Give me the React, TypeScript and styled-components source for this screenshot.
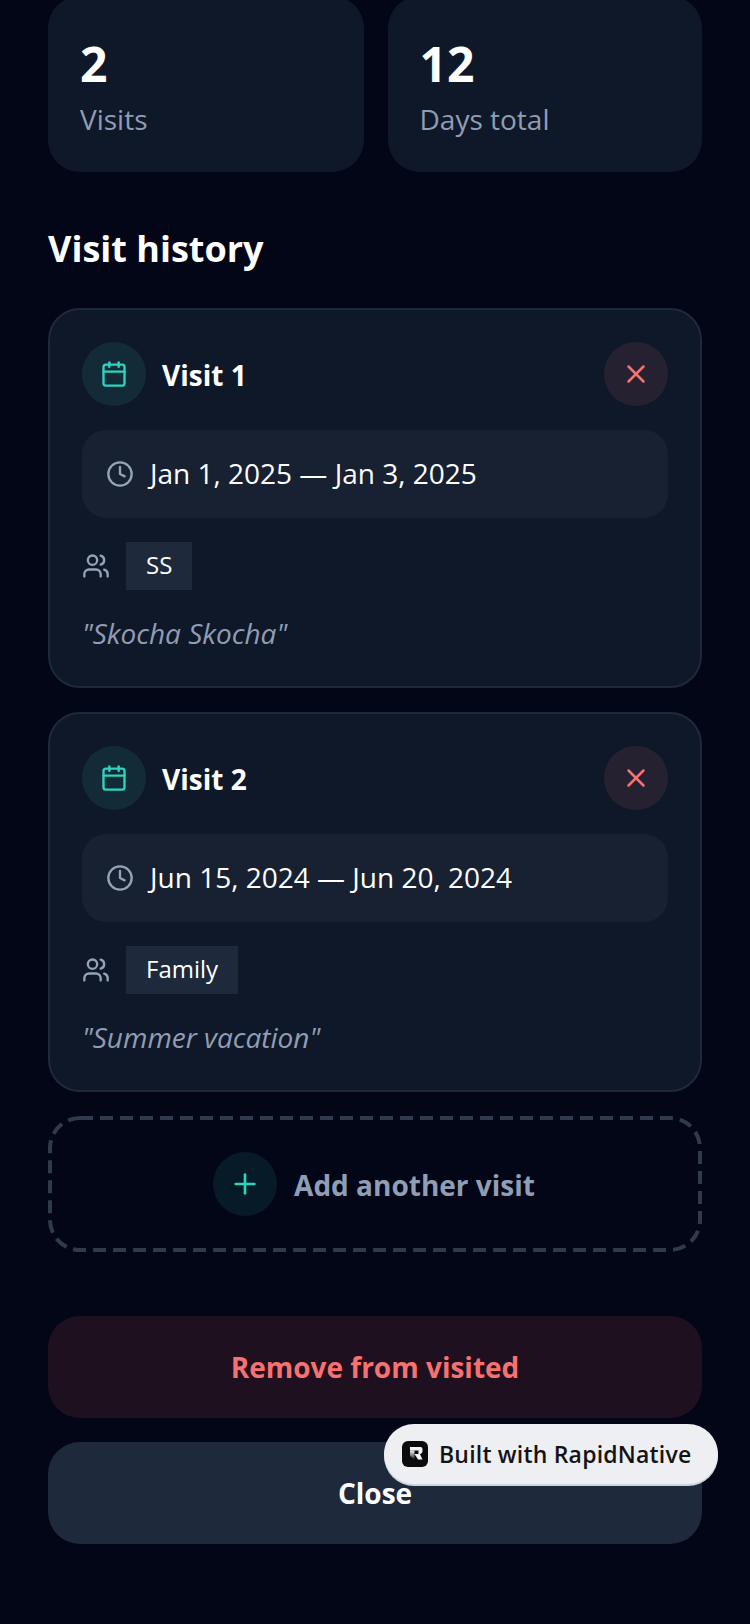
import React from 'react';
import styled, {createGlobalStyle} from 'styled-components';
import {Calendar, Clock, Plus, Users, X} from 'lucide-react';

const visits = [
    {title: 'Visit 1', dates: 'Jan 1, 2025 — Jan 3, 2025', company: 'SS', note: '"Skocha Skocha"'},
    {title: 'Visit 2', dates: 'Jun 15, 2024 — Jun 20, 2024', company: 'Family', note: '"Summer vacation"'},
];

const App = () => {
    return (
        <>
            <GlobalStyle/>
            <Page>
                <Stats>
                    <StatCard>
                        <StatValue>2</StatValue>
                        <StatLabel>Visits</StatLabel>
                    </StatCard>
                    <StatCard>
                        <StatValue>12</StatValue>
                        <StatLabel>Days total</StatLabel>
                    </StatCard>
                </Stats>
                <Heading>Visit history</Heading>
                <VisitList>
                    {visits.map((visit) => (
                        <VisitCard key={visit.title}>
                            <VisitHeader>
                                <IconCircle tone='teal'>
                                    <Calendar size={28} color='#2dd4bf' strokeWidth={2}/>
                                </IconCircle>
                                <VisitTitle>{visit.title}</VisitTitle>
                                <IconCircle tone='red'>
                                    <X size={30} color='#f87171' strokeWidth={2}/>
                                </IconCircle>
                            </VisitHeader>
                            <DateRow>
                                <Clock size={28} color='#94a3b8' strokeWidth={2}/>
                                <DateText>{visit.dates}</DateText>
                            </DateRow>
                            <CompanyRow>
                                <Users size={28} color='#94a3b8' strokeWidth={2}/>
                                <Chip>{visit.company}</Chip>
                            </CompanyRow>
                            <Note>{visit.note}</Note>
                        </VisitCard>
                    ))}
                    <AddCard>
                        <DashedOutline viewBox='0 0 654 136'>
                            <rect x='2' y='2' width='650' height='132' rx='30' fill='none' stroke='#2f3b4c' strokeWidth='4' strokeDasharray='13 7'/>
                        </DashedOutline>
                        <IconCircle tone='teal'>
                            <Plus size={32} color='#2dd4bf' strokeWidth={2}/>
                        </IconCircle>
                        <AddLabel>Add another visit</AddLabel>
                    </AddCard>
                </VisitList>
                <Actions>
                    <ActionButton variant='danger'>Remove from visited</ActionButton>
                    <ActionButton variant='plain'>Close</ActionButton>
                </Actions>
                <Badge>
                    <BadgeLogo viewBox='0 0 26 26'>
                        <defs>
                            <linearGradient id='stemFade' x1='0' y1='0' x2='0' y2='1'>
                                <stop offset='0' stopColor='#f4f4f5'/>
                                <stop offset='1' stopColor='#f4f4f5' stopOpacity='0'/>
                            </linearGradient>
                        </defs>
                        <rect width='26' height='26' rx='6' fill='#0b0b0d'/>
                        <path d='M8 9.500h4.500V19L8 15z' fill='url(#stemFade)'/>
                        <path d='M8 6h10.500Q20.500 6 20.500 8v2.500q0 1.500-2.500 2.800L20.500 18.500H16L12.500 13h4V9.500H8z' fill='#f4f4f5'/>
                    </BadgeLogo>
                    <BadgeText>Built with RapidNative</BadgeText>
                </Badge>
            </Page>
        </>
    );
};

const GlobalStyle = createGlobalStyle`
  html, body {
    margin: 0;
    padding: 0;
    background-color: #020617;
  }

  * {
    box-sizing: border-box;
  }
`;

const Page = styled.div`
  position: relative;
  width: 750px;
  height: 1624px;
  padding: 0 48px;
  overflow: hidden;
  background-color: #020617;
  font-family: "Open Sans", sans-serif;
`;

const Stats = styled.div`
  display: grid;
  grid-template-columns: 315.5px 1fr;
  gap: 24px;
  margin-top: -4px;
`;

const StatCard = styled.div`
  height: 176px;
  padding: 36px 32px 0;
  border-radius: 32px;
  background-color: #0f1829;
`;

const StatValue = styled.div`
  font-size: 48px;
  line-height: 64px;
  font-weight: 700;
  color: #ffffff;
`;

const StatLabel = styled.div`
  margin-top: 3px;
  font-size: 28px;
  line-height: 40px;
  color: #919db3;
`;

const Heading = styled.div`
  margin-top: 49px;
  font-size: 36px;
  line-height: 56px;
  font-weight: 700;
  color: #ffffff;
`;

const VisitList = styled.div`
  display: flex;
  flex-direction: column;
  gap: 24px;
  margin-top: 31px;
`;

const VisitCard = styled.div`
  height: 380px;
  padding: 32px;
  border: 2px solid #1e293b;
  border-radius: 32px;
  background-color: #0f1829;
`;

const VisitHeader = styled.div`
  display: flex;
  align-items: center;
`;

const IconCircle = styled.div<{ tone: 'teal' | 'red' }>`
  display: flex;
  align-items: center;
  justify-content: center;
  flex-shrink: 0;
  width: 64px;
  height: 64px;
  border-radius: 50%;
  background-color: ${(props) => props.tone === 'teal' ? 'rgba(45, 212, 191, 0.1)' : 'rgba(248, 113, 113, 0.1)'};
`;

const VisitTitle = styled.div`
  flex: 1;
  margin-left: 16px;
  padding-top: 2px;
  font-size: 28px;
  font-weight: 700;
  color: #ffffff;
`;

const DateRow = styled.div`
  display: flex;
  align-items: center;
  gap: 16px;
  height: 88px;
  margin-top: 24px;
  padding: 0 24px;
  border-radius: 24px;
  background-color: #172132;
`;

const DateText = styled.div`
  margin-top: -2px;
  font-size: 28px;
  color: #ffffff;
`;

const CompanyRow = styled.div`
  display: flex;
  align-items: center;
  gap: 16px;
  margin-top: 24px;
`;

const Chip = styled.div`
  height: 48px;
  padding: 0 20px;
  font-size: 24px;
  line-height: 46px;
  color: #ffffff;
  background-color: #1e293b;
`;

const Note = styled.div`
  margin-top: 23px;
  font-size: 28px;
  line-height: 40px;
  font-style: italic;
  color: #919db3;
`;

const AddCard = styled.div`
  position: relative;
  display: flex;
  align-items: center;
  justify-content: center;
  gap: 17px;
  height: 136px;
  padding-right: 2px;
`;

const DashedOutline = styled.svg`
  position: absolute;
  inset: 0;
  width: 100%;
  height: 100%;
`;

const AddLabel = styled.div`
  padding-top: 2px;
  font-size: 28px;
  font-weight: 700;
  color: #919db3;
`;

const Actions = styled.div`
  display: flex;
  flex-direction: column;
  gap: 24px;
  margin-top: 64px;
`;

const ActionButton = styled.div<{ variant: 'danger' | 'plain' }>`
  display: flex;
  align-items: center;
  justify-content: center;
  height: 102px;
  border-radius: 32px;
  font-size: 28px;
  font-weight: 700;
  color: ${(props) => props.variant === 'danger' ? '#f87171' : '#ffffff'};
  background-color: ${(props) => props.variant === 'danger' ? '#1f1020' : '#1e293b'};
`;

const Badge = styled.div`
  position: absolute;
  left: 384px;
  top: 1424px;
  display: flex;
  align-items: center;
  gap: 11px;
  width: 334px;
  height: 60px;
  padding: 0 18px;
  border-radius: 30px;
  background-color: #eeeff2;
  box-shadow: 0 2px 0 #cbd5e1;
`;

const BadgeLogo = styled.svg`
  width: 26px;
  height: 26px;
  flex-shrink: 0;
`;

const BadgeText = styled.div`
  font-size: 23px;
  font-weight: 600;
  letter-spacing: 0.2px;
  white-space: nowrap;
  color: #141416;
`;

export default App;
